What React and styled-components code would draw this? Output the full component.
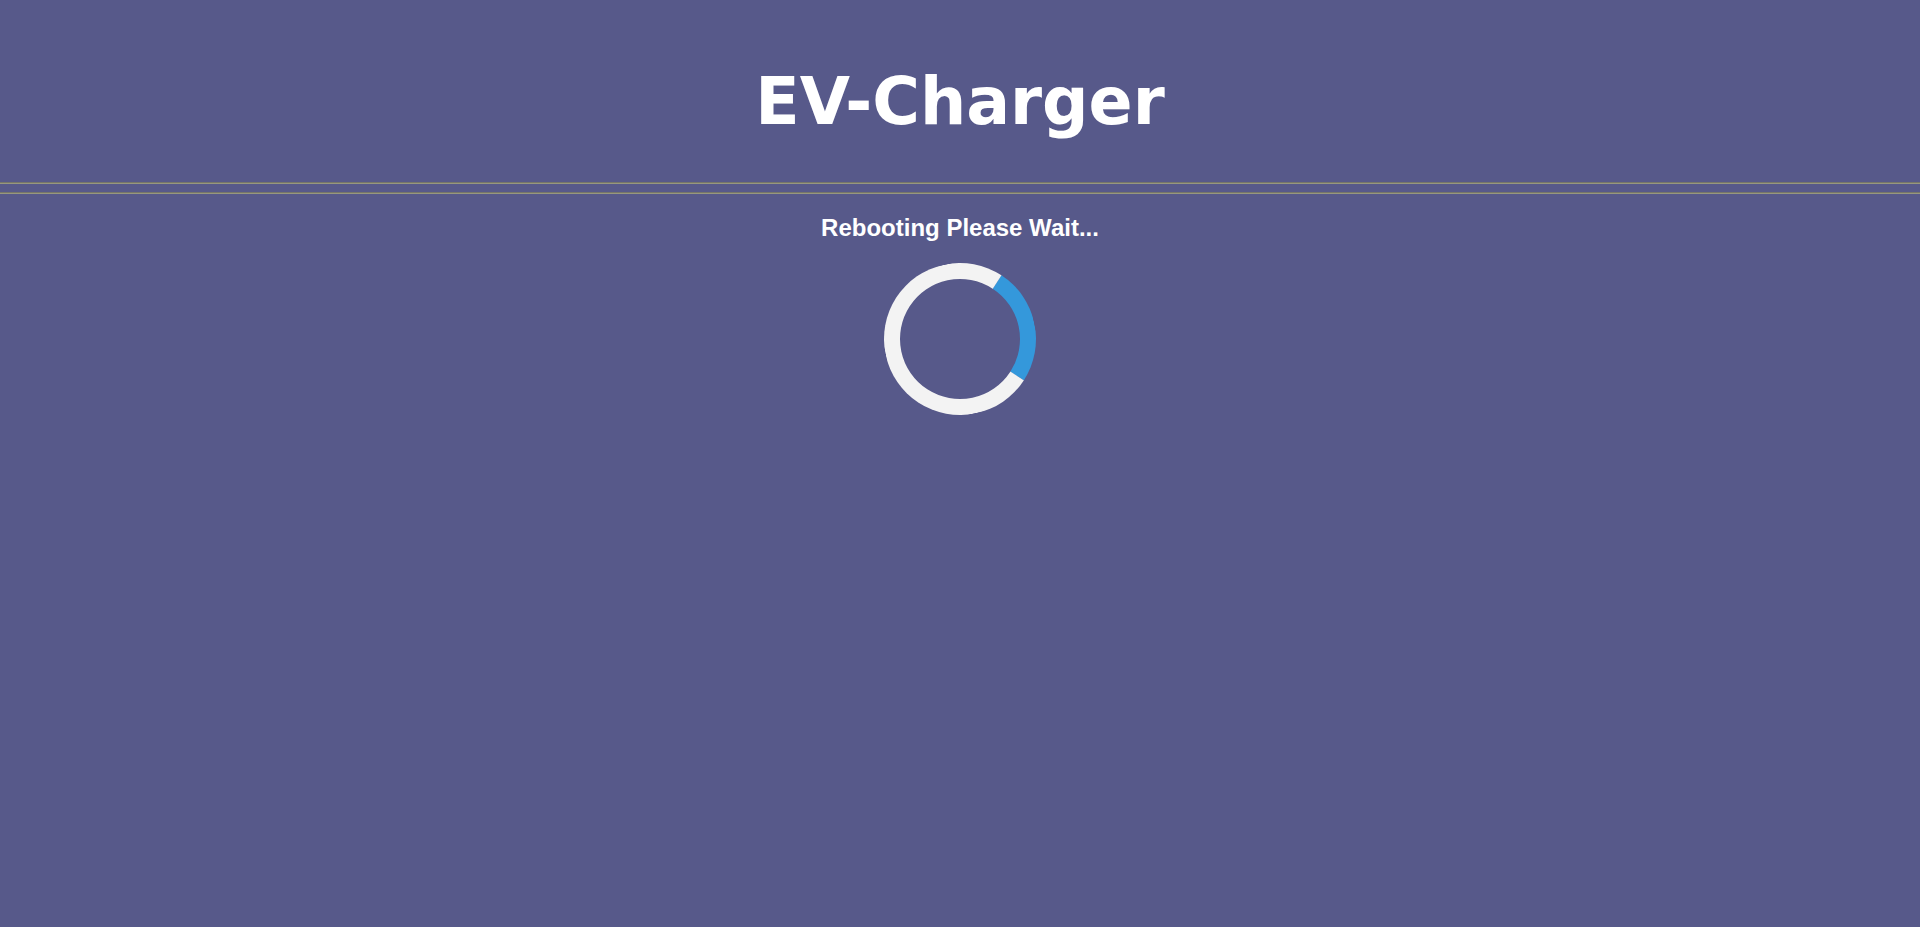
import React from 'react';
import styled, { createGlobalStyle } from 'styled-components';

const GlobalStyle = createGlobalStyle`
  html, body {
    margin: 0;
    padding: 0;
    background: #57598a;
  }
  body {
    min-height: 927px;
    font-family: "Liberation Sans", Arial, sans-serif;
    color: #ffffff;
  }
`;

const Page = styled.div`
  display: flex;
  flex-direction: column;
  align-items: stretch;
  min-height: 927px;
  background: #57598a;
`;

const Header = styled.header`
  padding-top: 64px;
  text-align: center;
`;

const Title = styled.h1`
  margin: 0;
  font-family: "DejaVu Sans", Verdana, sans-serif;
  font-weight: bold;
  font-size: 65px;
  line-height: 76px;
  color: #ffffff;
`;

const Rule = styled.hr`
  width: 100%;
  height: 0;
  margin: ${p => p.$top}px 0 0 0;
  border: none;
  border-top: 1px solid #76766a;
  border-bottom: 1px solid #97977f;
`;

const Status = styled.section`
  display: flex;
  flex-direction: column;
  align-items: center;
  padding-top: 20px;
`;

const Message = styled.h2`
  margin: 0;
  font-family: "Liberation Sans", Arial, sans-serif;
  font-weight: bold;
  font-size: 24px;
  line-height: 28px;
  color: #ffffff;
`;

const Loader = styled.div`
  margin-top: 21px;
  width: 120px;
  height: 120px;
  border: 16px solid #f3f3f3;
  border-top: 16px solid #3498db;
  border-radius: 50%;
  transform: rotate(78deg);
`;

export default function App() {
  return (
    <>
      <GlobalStyle />
      <Page>
        <Header>
          <Title>EV-Charger</Title>
        </Header>
        <Rule $top={42} />
        <Rule $top={8} />
        <Status>
          <Message>Rebooting Please Wait...</Message>
          <Loader />
        </Status>
      </Page>
    </>
  );
}
